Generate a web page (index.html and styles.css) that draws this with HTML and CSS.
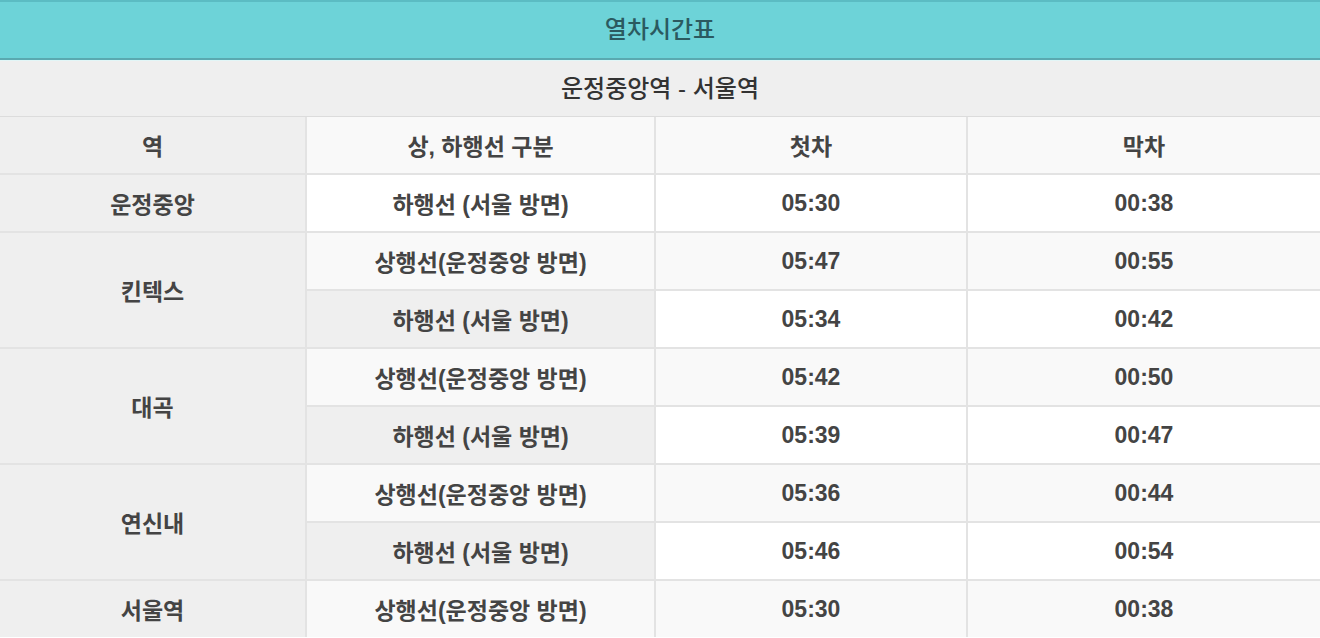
FILE: index.html
```html
<!DOCTYPE html>
<html lang="ko">
<head>
  <meta charset="UTF-8">
  <meta name="viewport" content="width=device-width, initial-scale=1.0">
  <title>열차시간표</title>
  <link rel="stylesheet" href="styles.css">
</head>
<body>
  <div class="timetable">
    <div class="tt-title">열차시간표</div>
    <div class="tt-route">운정중앙역 - 서울역</div>

    <table class="tt-table">
      <colgroup>
        <col class="c-stn">
        <col class="c-dir">
        <col class="c-first">
        <col class="c-last">
      </colgroup>
      <thead>
        <tr>
          <th class="stn">역</th>
          <th>상, 하행선 구분</th>
          <th>첫차</th>
          <th>막차</th>
        </tr>
      </thead>
      <tbody>
        <tr class="odd">
          <th class="stn">운정중앙</th>
          <td>하행선 (서울 방면)</td>
          <td>05:30</td>
          <td>00:38</td>
        </tr>
        <tr class="even">
          <th class="stn" rowspan="2">킨텍스</th>
          <td>상행선(운정중앙 방면)</td>
          <td>05:47</td>
          <td>00:55</td>
        </tr>
        <tr class="odd">
          <td class="sub">하행선 (서울 방면)</td>
          <td>05:34</td>
          <td>00:42</td>
        </tr>
        <tr class="even">
          <th class="stn" rowspan="2">대곡</th>
          <td>상행선(운정중앙 방면)</td>
          <td>05:42</td>
          <td>00:50</td>
        </tr>
        <tr class="odd">
          <td class="sub">하행선 (서울 방면)</td>
          <td>05:39</td>
          <td>00:47</td>
        </tr>
        <tr class="even">
          <th class="stn" rowspan="2">연신내</th>
          <td>상행선(운정중앙 방면)</td>
          <td>05:36</td>
          <td>00:44</td>
        </tr>
        <tr class="odd">
          <td class="sub">하행선 (서울 방면)</td>
          <td>05:46</td>
          <td>00:54</td>
        </tr>
        <tr class="even">
          <th class="stn">서울역</th>
          <td>상행선(운정중앙 방면)</td>
          <td>05:30</td>
          <td>00:38</td>
        </tr>
      </tbody>
    </table>
  </div>
</body>
</html>
```

FILE: styles.css
```css
body {
  margin: 0;
  background-color: #fff;
  font-family: "Liberation Sans", "Noto Sans CJK KR", sans-serif;
  color: #444;
}
.timetable {
  width: 1320px;
}
.tt-title {
  height: 56px;
  line-height: 56px;
  text-align: center;
  background-color: #6dd3d8;
  border-top: 2px solid #5bbcc3;
  border-bottom: 2px solid #5aa9b0;
  color: #2b5a60;
  font-size: 24px;
  font-weight: 500;
}
.tt-route {
  height: 55px;
  line-height: 55px;
  text-align: center;
  background-color: #efefef;
  border-top: 1px solid #e2f6f7;
  border-bottom: 1px solid #dcdcdc;
  color: #333;
  font-size: 24px;
  font-weight: 500;
}
.tt-table {
  width: 100%;
  border-collapse: collapse;
  border-style: hidden;
  table-layout: fixed;
}
.c-stn { width: 306px; }
.c-dir { width: 349px; }
.c-first { width: 312px; }
.c-last { width: 353px; }

.tt-table th,
.tt-table td {
  height: 56px;
  padding: 0;
  border: 2px solid #e3e3e3;
  text-align: center;
  font-size: 23px;
  font-weight: bold;
  color: #444;
}
.tt-table thead th {
  background-color: #f9f9f9;
}
.tt-table th.stn {
  background-color: #efefef;
}
.tt-table tr.odd td {
  background-color: #fff;
}
.tt-table tr.even td {
  background-color: #f9f9f9;
}
.tt-table tr.odd td.sub {
  background-color: #efefef;
}
```
